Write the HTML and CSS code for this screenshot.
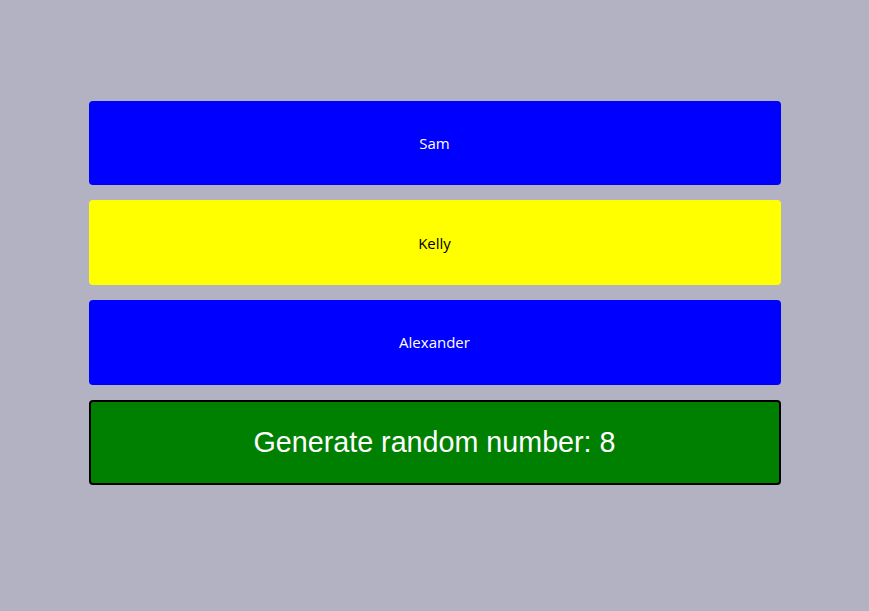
FILE: index.html
```html
<!DOCTYPE html>
<html>
<head>
<meta charset="utf-8">
<link rel="stylesheet" href="styles.css">
</head>
<body>
<div class="list">
  <div class="card card-blue">Sam</div>
  <div class="card card-yellow">Kelly</div>
  <div class="card card-blue">Alexander</div>
  <button class="gen">Generate random number: 8</button>
</div>
</body>
</html>
```

FILE: styles.css
```css
html, body {
  margin: 0;
  padding: 0;
  height: 100%;
  background: #b3b2c2;
}
.list {
  display: flex;
  flex-direction: column;
  gap: 15px;
  width: 692px;
  margin: 0 auto;
  padding-top: 100.67px;
}
.card {
  height: 84.67px;
  border-radius: 4px;
  display: flex;
  align-items: center;
  justify-content: center;
  font-family: "Open Sans", sans-serif;
  font-size: 15px;
}
.card-blue {
  background: #0000ff;
  color: #ffffff;
}
.card-yellow {
  background: #ffff00;
  color: #000000;
}
.gen {
  height: 85.5px;
  box-sizing: border-box;
  border: 2px solid #000;
  border-radius: 4px;
  background: #008000;
  color: #ffffff;
  font-family: "Liberation Sans", Arial, sans-serif;
  font-size: 28.7px;
  padding: 0;
  margin: 0;
  cursor: pointer;
}
```
